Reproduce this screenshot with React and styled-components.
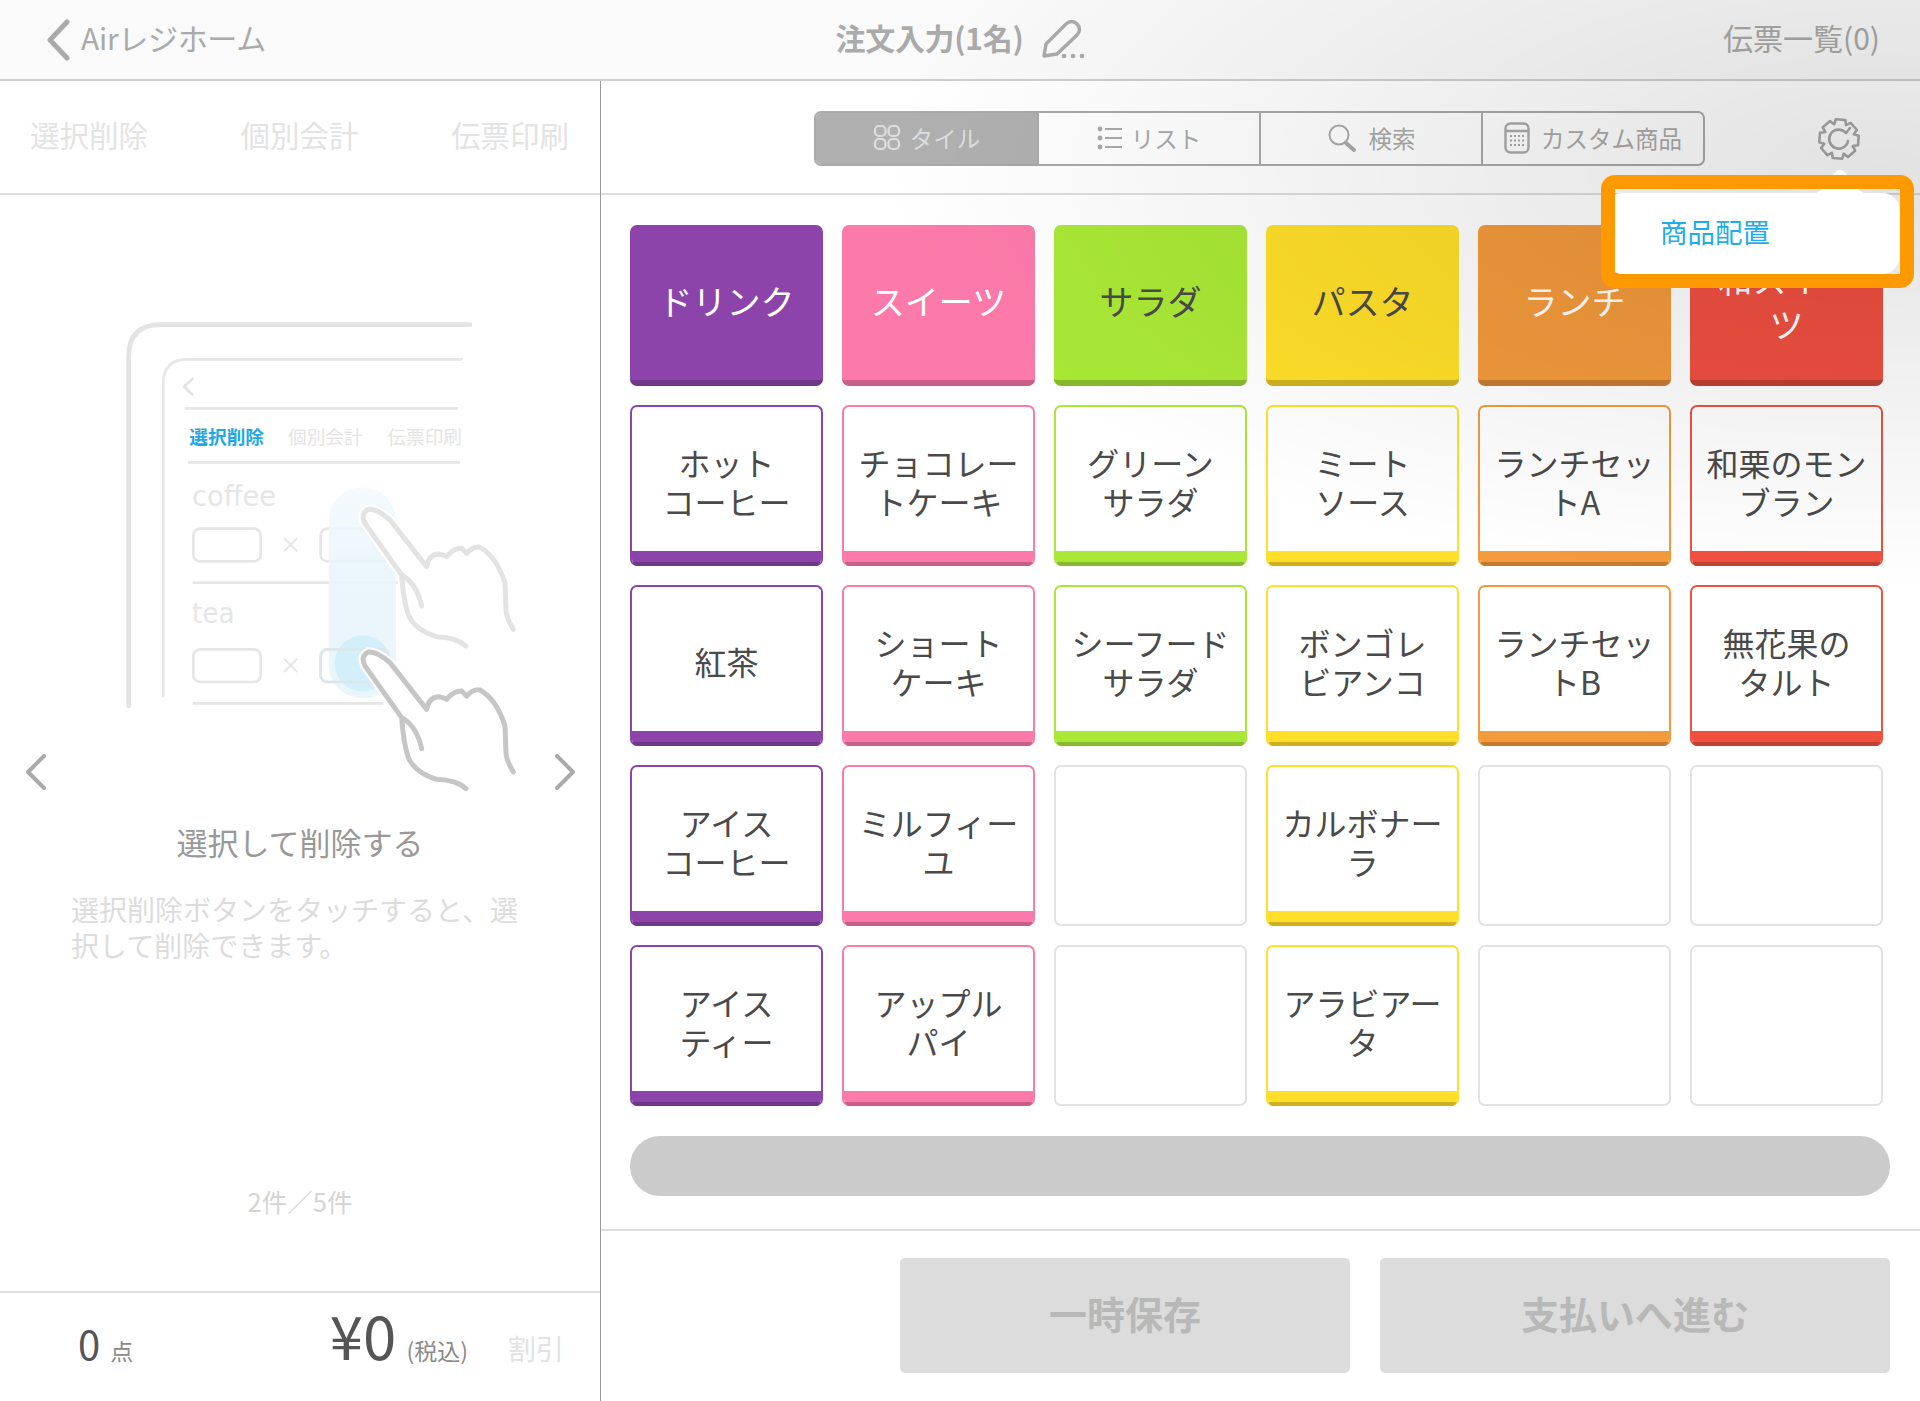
import React from 'react';
import styled, { createGlobalStyle } from 'styled-components';

const FONT = '"Noto Sans CJK JP", "Noto Sans", "Liberation Sans", sans-serif';

const GlobalStyle = createGlobalStyle`
  html, body {
    margin: 0;
    padding: 0;
    background: #fff;
    font-family: ${FONT};
  }
  * {
    box-sizing: border-box;
  }
`;

const Page = styled.div`
  position: relative;
  width: 1920px;
  height: 1401px;
  overflow: hidden;
  background: #fff;
  display: flex;
  flex-direction: column;
`;

// grey dim behind the popover, stronger near the gear
const Dim = styled.div`
  position: absolute;
  inset: 0;
  pointer-events: none;
  background: radial-gradient(ellipse 1000px 420px at 1880px 170px, rgba(0, 0, 0, 0.115), rgba(0, 0, 0, 0) 100%);
`;

const Header = styled.header`
  height: 81px;
  flex: none;
  display: grid;
  grid-template-columns: 1fr auto 1fr;
  align-items: center;
  padding: 0 40px 0 46px;
  background: #fafafa;
  border-bottom: 2px solid #cfcfcf;
  color: #aaa;
  font-size: 30px;
  letter-spacing: -0.3px;
`;

const Back = styled.div`
  display: flex;
  align-items: center;
  gap: 11px;
  span {
    margin-bottom: 5px;
  }
`;

const Title = styled.div`
  display: flex;
  align-items: center;
  gap: 17px;
  font-weight: 700;
  span {
    margin-bottom: 5px;
  }
`;

const Slips = styled.div`
  justify-self: end;
  margin-bottom: 5px;
  letter-spacing: 0;
`;

const Body = styled.div`
  flex: 1;
  display: flex;
  min-height: 0;
`;

const LeftPane = styled.aside`
  width: 601px;
  flex: none;
  display: flex;
  flex-direction: column;
  border-right: 1px solid #999;
`;

const Actions = styled.div`
  height: 114px;
  flex: none;
  display: flex;
  justify-content: space-between;
  align-items: center;
  padding: 0 31px 7px 30px;
  border-bottom: 2px solid #ddd;
  color: #e3e3e3;
  font-size: 29.5px;
`;

const Slide = styled.div`
  flex: 1;
  display: flex;
  flex-direction: column;
  align-items: center;
`;

const Carousel = styled.div`
  width: 100%;
  display: flex;
  align-items: flex-end;
  padding: 105px 0 0 25px;
`;

const Pager = styled.svg`
  width: 21px;
  height: 36px;
  flex: none;
  margin: 0 ${(p) => (p.$left ? 54 : 0)}px 30px ${(p) => (p.$left ? 0 : 5)}px;
`;

const Caption = styled.div`
  font-size: 31px;
  line-height: 44px;
  color: #999;
`;

const Desc = styled.p`
  width: 100%;
  margin: 27px 0 0;
  padding-left: 71px;
  font-size: 28px;
  line-height: 36px;
  color: #dcdcdc;
  white-space: pre-line;
`;

const Count = styled.div`
  margin-top: auto;
  padding-bottom: 71px;
  font-size: 25.5px;
  line-height: 38px;
  color: #d4d4d4;
`;

const Totals = styled.div`
  height: 110px;
  flex: none;
  display: flex;
  align-items: baseline;
  padding: 5px 36px 0 78px;
  border-top: 2px solid #ddd;
  color: #555;
  line-height: 1.2;
`;

const Qty = styled.span`
  font-size: 40px;
`;

const Small = styled.span`
  margin-left: 10px;
  font-size: 23px;
  color: #8a8a8a;
`;

const Yen = styled.span`
  margin-left: auto;
  font-size: 60px;
`;

const Discount = styled.span`
  margin-left: 40px;
  font-size: 28px;
  color: #e2e2e2;
`;

const RightPane = styled.main`
  flex: 1;
  display: flex;
  flex-direction: column;
  min-width: 0;
`;

const Toolbar = styled.div`
  height: 114px;
  flex: none;
  display: flex;
  align-items: flex-start;
  padding: 30px 0 0 213px;
  border-bottom: 2px solid #ddd;
`;

const Segments = styled.div`
  display: flex;
  height: 55px;
  border: 2px solid #aaa;
  border-radius: 7px;
  overflow: hidden;
`;

const Segment = styled.div`
  width: ${(p) => (p.$active ? 221 : 222)}px;
  display: flex;
  align-items: center;
  justify-content: center;
  gap: ${(p) => p.$gap || 9}px;
  padding-bottom: 2px;
  font-size: 23.5px;
  color: ${(p) => (p.$active ? '#dedede' : '#aaa')};
  background: ${(p) => (p.$active ? '#b0b0b0' : 'transparent')};
  & + & {
    border-left: 2px solid #aaa;
  }
`;

const GearWrap = styled.div`
  margin: 6px 0 0 112px;
  width: 44px;
  height: 44px;
`;

const Tiles = styled.div`
  display: grid;
  grid-template-columns: repeat(6, 193px);
  grid-auto-rows: 161px;
  gap: 19px;
  padding: 30px 0 0 29px;
`;

const Tile = styled.div`
  display: flex;
  flex-direction: column;
  overflow: hidden;
  border-radius: 7px;
  background: ${(p) => (p.$filled ? p.$color : '#fff')};
  border: ${(p) => (p.$filled ? '0' : `2px solid ${p.$color || '#e2e2e2'}`)};
  border-bottom: ${(p) => (p.$filled ? `6px solid ${p.$dark}` : p.$color ? '0' : '2px solid #e2e2e2')};
`;

const TileLabel = styled.div`
  flex: 1;
  display: flex;
  align-items: center;
  justify-content: center;
  text-align: center;
  white-space: pre-line;
  padding: ${(p) => (p.$filled ? '0 0 4px' : '5px 0 0')};
  font-size: ${(p) => (p.$filled ? 34 : 32)}px;
  line-height: ${(p) => (p.$filled ? 45 : 39)}px;
  color: ${(p) => p.$ink};
`;

const TileFoot = styled.div`
  height: 15px;
  flex: none;
  background: ${(p) => p.$color};
  border-bottom: 4px solid ${(p) => p.$dark};
`;

const ScrollPill = styled.div`
  width: 1260px;
  height: 60px;
  margin: 30px 0 33px 29px;
  border-radius: 30px;
  background: #cbcbcb;
`;

const Footer = styled.div`
  flex: 1;
  display: flex;
  justify-content: flex-end;
  gap: 30px;
  padding: 27px 30px 28px 0;
  border-top: 2px solid #ddd;
`;

const FooterButton = styled.div`
  width: ${(p) => p.$width}px;
  display: flex;
  align-items: center;
  justify-content: center;
  padding-bottom: 6px;
  border-radius: 5px;
  background: #dcdcdc;
  color: #b8b8b8;
  font-size: 38px;
  font-weight: 700;
`;

const Popover = styled.div`
  position: absolute;
  top: 193px;
  left: 1605px;
  width: 295px;
  height: 81px;
  display: flex;
  align-items: center;
  padding: 0 0 5px 55px;
  border-radius: 18px;
  background: #fff;
  color: #1fade9;
  font-size: 27.5px;
`;

const Caret = styled.svg`
  position: absolute;
  top: 167px;
  left: 1810px;
  width: 60px;
  height: 27px;
`;

const Highlight = styled.div`
  position: absolute;
  top: 175px;
  left: 1601px;
  width: 313px;
  height: 113px;
  border: 14px solid #ff9900;
  border-radius: 14px;
`;

const PURPLE = { $color: '#8c44aa', $dark: '#6f3788', on: '#fff' };
const PINK = { $color: '#fc7aa9', $dark: '#c95f89', on: '#fff' };
const GREEN = { $color: '#a9e836', $dark: '#86b92b', on: '#4a4a4a' };
const YELLOW = { $color: '#ffdf29', $dark: '#cfb021', on: '#4a4a4a' };
const ORANGE = { $color: '#f39a3c', $dark: '#c67a30', on: '#fff' };
const RED = { $color: '#f05040', $dark: '#c24033', on: '#fff' };

const categories = [
  ['ドリンク', PURPLE],
  ['スイーツ', PINK],
  ['サラダ', GREEN],
  ['パスタ', YELLOW],
  ['ランチ', ORANGE],
  ['和スイー\nツ', RED],
];

const products = [
  ['ホット\nコーヒー', PURPLE],
  ['チョコレー\nトケーキ', PINK],
  ['グリーン\nサラダ', GREEN],
  ['ミート\nソース', YELLOW],
  ['ランチセッ\nトA', ORANGE],
  ['和栗のモン\nブラン', RED],
  ['紅茶', PURPLE],
  ['ショート\nケーキ', PINK],
  ['シーフード\nサラダ', GREEN],
  ['ボンゴレ\nビアンコ', YELLOW],
  ['ランチセッ\nトB', ORANGE],
  ['無花果の\nタルト', RED],
  ['アイス\nコーヒー', PURPLE],
  ['ミルフィー\nユ', PINK],
  null,
  ['カルボナー\nラ', YELLOW],
  null,
  null,
  ['アイス\nティー', PURPLE],
  ['アップル\nパイ', PINK],
  null,
  ['アラビアー\nタ', YELLOW],
  null,
  null,
];

const Chevron = ({ left }) => (
  <Pager viewBox="0 0 21 36" $left={left}>
    <path
      d={left ? 'M19 2 L3 18 L19 34' : 'M2 2 L18 18 L2 34'}
      fill="none"
      stroke="#aaa"
      strokeWidth="4"
      strokeLinecap="round"
      strokeLinejoin="round"
    />
  </Pager>
);

const BackIcon = () => (
  <svg width="24" height="42" viewBox="0 0 24 42">
    <path d="M21 3 L4 21 L21 39" fill="none" stroke="#aaa" strokeWidth="5" strokeLinecap="round" strokeLinejoin="round" />
  </svg>
);

const PencilIcon = () => (
  <svg width="50" height="44" viewBox="0 0 50 44">
    <path
      d="M4 38 L6 26 L26 6 Q32 1 37 6 Q42 11 37 17 L17 36 Z"
      fill="none"
      stroke="#aaa"
      strokeWidth="3.4"
      strokeLinejoin="round"
    />
    <circle cx="24" cy="38" r="2.3" fill="#aaa" />
    <circle cx="33" cy="38" r="2.3" fill="#aaa" />
    <circle cx="42" cy="38" r="2.3" fill="#aaa" />
  </svg>
);

const TileIcon = () => (
  <svg width="28" height="27" viewBox="0 0 28 27" fill="none" stroke="#dedede" strokeWidth="2.2">
    <rect x="2" y="2" width="10.5" height="10" rx="4" />
    <rect x="15.5" y="2" width="10.5" height="10" rx="4" />
    <rect x="2" y="15" width="10.5" height="10" rx="4" />
    <rect x="15.5" y="15" width="10.5" height="10" rx="4" />
  </svg>
);

const ListIcon = () => (
  <svg width="25" height="26" viewBox="0 0 25 26">
    <g fill="#aaa">
      <circle cx="3" cy="4" r="2.4" />
      <circle cx="3" cy="13" r="2.4" />
      <circle cx="3" cy="22" r="2.4" />
    </g>
    <path d="M8 4 H25 M8 13 H25 M8 22 H25" stroke="#aaa" strokeWidth="2" />
  </svg>
);

const SearchIcon = () => (
  <svg width="30" height="30" viewBox="0 0 30 30" fill="none" stroke="#aaa">
    <circle cx="12" cy="12" r="9.5" strokeWidth="2" />
    <path d="M19 20 L27 27" strokeWidth="4" strokeLinecap="round" />
  </svg>
);

const CalcIcon = () => (
  <svg width="26" height="32" viewBox="0 0 26 32">
    <rect x="1.5" y="1.5" width="23" height="29" rx="5" fill="none" stroke="#aaa" strokeWidth="2.4" />
    <path d="M1.5 9 H24.5" stroke="#aaa" strokeWidth="2.4" />
    <g fill="#aaa">
      {[14, 18.5, 23].map((y) =>
        [7, 11, 15, 19].map((x) => <rect key={`${x}-${y}`} x={x - 1} y={y - 1} width="2" height="2" />)
      )}
    </g>
  </svg>
);

// 8 teeth, open at the upper right like the original glyph
const gearPath = () => {
  const cx = 22;
  const cy = 22;
  const pts = [];
  for (let i = 0; i < 8; i++) {
    const a = -Math.PI / 2 + (i * Math.PI) / 4 + Math.PI / 4 + 0.08;
    [
      [-0.39, 15.5],
      [-0.24, 20],
      [0.24, 20],
      [0.39, 15.5],
    ].forEach(([d, r]) => {
      pts.push([cx + r * Math.cos(a + d), cy + r * Math.sin(a + d)]);
    });
  }
  return pts.map((p, i) => `${i ? 'L' : 'M'}${p[0].toFixed(1)} ${p[1].toFixed(1)}`).join(' ');
};

const GearIcon = () => (
  <GearWrap>
    <svg width="44" height="44" viewBox="0 0 44 44" fill="none" stroke="#a8a8a8" strokeWidth="2.6" strokeLinejoin="round" strokeLinecap="round">
      <path d={gearPath()} />
      <path d="M29 16 A9.5 9.5 0 1 0 31 24 M29 16 L33 11" />
    </svg>
  </GearWrap>
);

const HAND_FILL =
  'M905 825 L795 670 Q780 640 805 628 Q830 625 870 660 L980 800 Q985 765 1015 762 Q1035 765 1040 770 Q1060 745 1085 745 Q1095 755 1100 760 Q1120 738 1140 742 Q1190 770 1215 850 L1218 930 Q1218 950 1240 988 L1098 1038 Q1070 1012 1010 1010 Q945 990 925 945 Q910 900 905 825 Z';
const HAND_LINE =
  'M965 918 Q950 850 905 825 L795 670 Q780 640 805 628 Q830 625 870 660 L980 800 Q985 765 1015 762 Q1035 765 1040 770 Q1060 745 1085 745 Q1095 755 1100 760 Q1120 738 1140 742 Q1190 770 1215 850 L1218 930 Q1218 950 1240 988 M905 825 Q910 900 925 945 Q945 990 1010 1010 Q1070 1012 1098 1038';

const Hand = ({ color, dy }) => (
  <g transform={`translate(0 ${dy})`}>
    <path d={HAND_FILL} fill="#fff" stroke="#fff" strokeWidth="28" strokeLinejoin="round" />
    <path d={HAND_LINE} fill="none" stroke={color} strokeWidth="15" strokeLinecap="round" strokeLinejoin="round" />
  </g>
);

const Illustration = () => (
  <svg width="450" height="520" viewBox="0 0 1350 1560" fontFamily={FONT}>
    <defs>
      <linearGradient id="swipe" x1="0" y1="0" x2="0" y2="1">
        <stop offset="0" stopColor="#f3fafe" />
        <stop offset="0.35" stopColor="#e8f5fc" />
        <stop offset="1" stopColor="#e6f4fb" />
      </linearGradient>
    </defs>
    <path d="M86 1218 V170 Q86 74 182 74 H1110" fill="none" stroke="#e3e3e3" strokeWidth="14" strokeLinecap="round" />
    <path d="M190 1192 V250 Q190 178 262 178 H1088" fill="none" stroke="#e6e6e6" strokeWidth="8" />
    <path d="M278 236 L252 260 L278 284" fill="none" stroke="#e3e3e3" strokeWidth="8" strokeLinecap="round" strokeLinejoin="round" />
    <path d="M254 325 H1074 M264 487 H1080" stroke="#e6e6e6" strokeWidth="8" />
    <text x="268" y="432" fontSize="56" fontWeight="700" fill="#1fa8e8">選択削除</text>
    <text x="564" y="432" fontSize="56" fill="#e4e4e4">個別会計</text>
    <text x="862" y="432" fontSize="56" fill="#e4e4e4">伝票印刷</text>
    <text x="276" y="618" fontSize="84" fontFamily="DejaVu Sans, sans-serif" fill="#e6e6e6" textLength="252" lengthAdjust="spacingAndGlyphs">coffee</text>
    <text x="276" y="968" fontSize="84" fontFamily="DejaVu Sans, sans-serif" fill="#e6e6e6" textLength="128" lengthAdjust="spacingAndGlyphs">tea</text>
    <g fill="none" stroke="#e6e6e6" strokeWidth="8">
      <rect x="280" y="686" width="202" height="98" rx="20" />
      <rect x="662" y="686" width="204" height="98" rx="20" />
      <rect x="280" y="1048" width="202" height="98" rx="20" />
      <rect x="662" y="1048" width="204" height="98" rx="20" />
      <path d="M552 714 L592 754 M592 714 L552 754 M552 1076 L592 1116 M592 1076 L552 1116" strokeWidth="6" />
      <path d="M278 848 H895 M278 1210 H850" />
    </g>
    <rect x="686" y="562" width="202" height="633" rx="100" fill="url(#swipe)" opacity="0.85" />
    <circle cx="788" cy="1090" r="84" fill="#d2effa" />
    <rect x="662" y="1048" width="204" height="98" rx="20" fill="none" stroke="#d9e6ea" strokeWidth="8" />
    <Hand color="#e3e3e3" dy={0} />
    <Hand color="#c6c6c6" dy={428} />
  </svg>
);

const App = () => (
  <Page>
    <GlobalStyle />
    <Header>
      <Back>
        <BackIcon />
        <span>Airレジホーム</span>
      </Back>
      <Title>
        <span>注文入力(1名)</span>
        <PencilIcon />
      </Title>
      <Slips>伝票一覧(0)</Slips>
    </Header>
    <Body>
      <LeftPane>
        <Actions>
          <span>選択削除</span>
          <span>個別会計</span>
          <span>伝票印刷</span>
        </Actions>
        <Slide>
          <Carousel>
            <Chevron left />
            <Illustration />
            <Chevron />
          </Carousel>
          <Caption>選択して削除する</Caption>
          <Desc>{'選択削除ボタンをタッチすると、選\n択して削除できます。'}</Desc>
          <Count>2件／5件</Count>
        </Slide>
        <Totals>
          <Qty>0</Qty>
          <Small>点</Small>
          <Yen>¥0</Yen>
          <Small>(税込)</Small>
          <Discount>割引</Discount>
        </Totals>
      </LeftPane>
      <RightPane>
        <Toolbar>
          <Segments>
            <Segment $active>
              <TileIcon />
              タイル
            </Segment>
            <Segment>
              <ListIcon />
              リスト
            </Segment>
            <Segment $gap={12}>
              <SearchIcon />
              検索
            </Segment>
            <Segment $gap={11}>
              <CalcIcon />
              カスタム商品
            </Segment>
          </Segments>
          <GearIcon />
        </Toolbar>
        <Tiles>
          {categories.map(([name, c]) => (
            <Tile key={name} $filled $color={c.$color} $dark={c.$dark}>
              <TileLabel $filled $ink={c.on}>{name}</TileLabel>
            </Tile>
          ))}
          {products.map((item, i) =>
            item ? (
              <Tile key={i} $color={item[1].$color}>
                <TileLabel $ink="#4a4a4a">{item[0]}</TileLabel>
                <TileFoot $color={item[1].$color} $dark={item[1].$dark} />
              </Tile>
            ) : (
              <Tile key={i} />
            )
          )}
        </Tiles>
        <ScrollPill />
        <Footer>
          <FooterButton $width={450}>一時保存</FooterButton>
          <FooterButton $width={510}>支払いへ進む</FooterButton>
        </Footer>
      </RightPane>
    </Body>
    <Dim />
    <Caret viewBox="0 0 60 27">
      <path d="M0 27 Q12 27 22 9 Q30 -3 38 9 Q48 27 60 27 Z" fill="#fff" />
    </Caret>
    <Popover>商品配置</Popover>
    <Highlight />
  </Page>
);

export default App;
